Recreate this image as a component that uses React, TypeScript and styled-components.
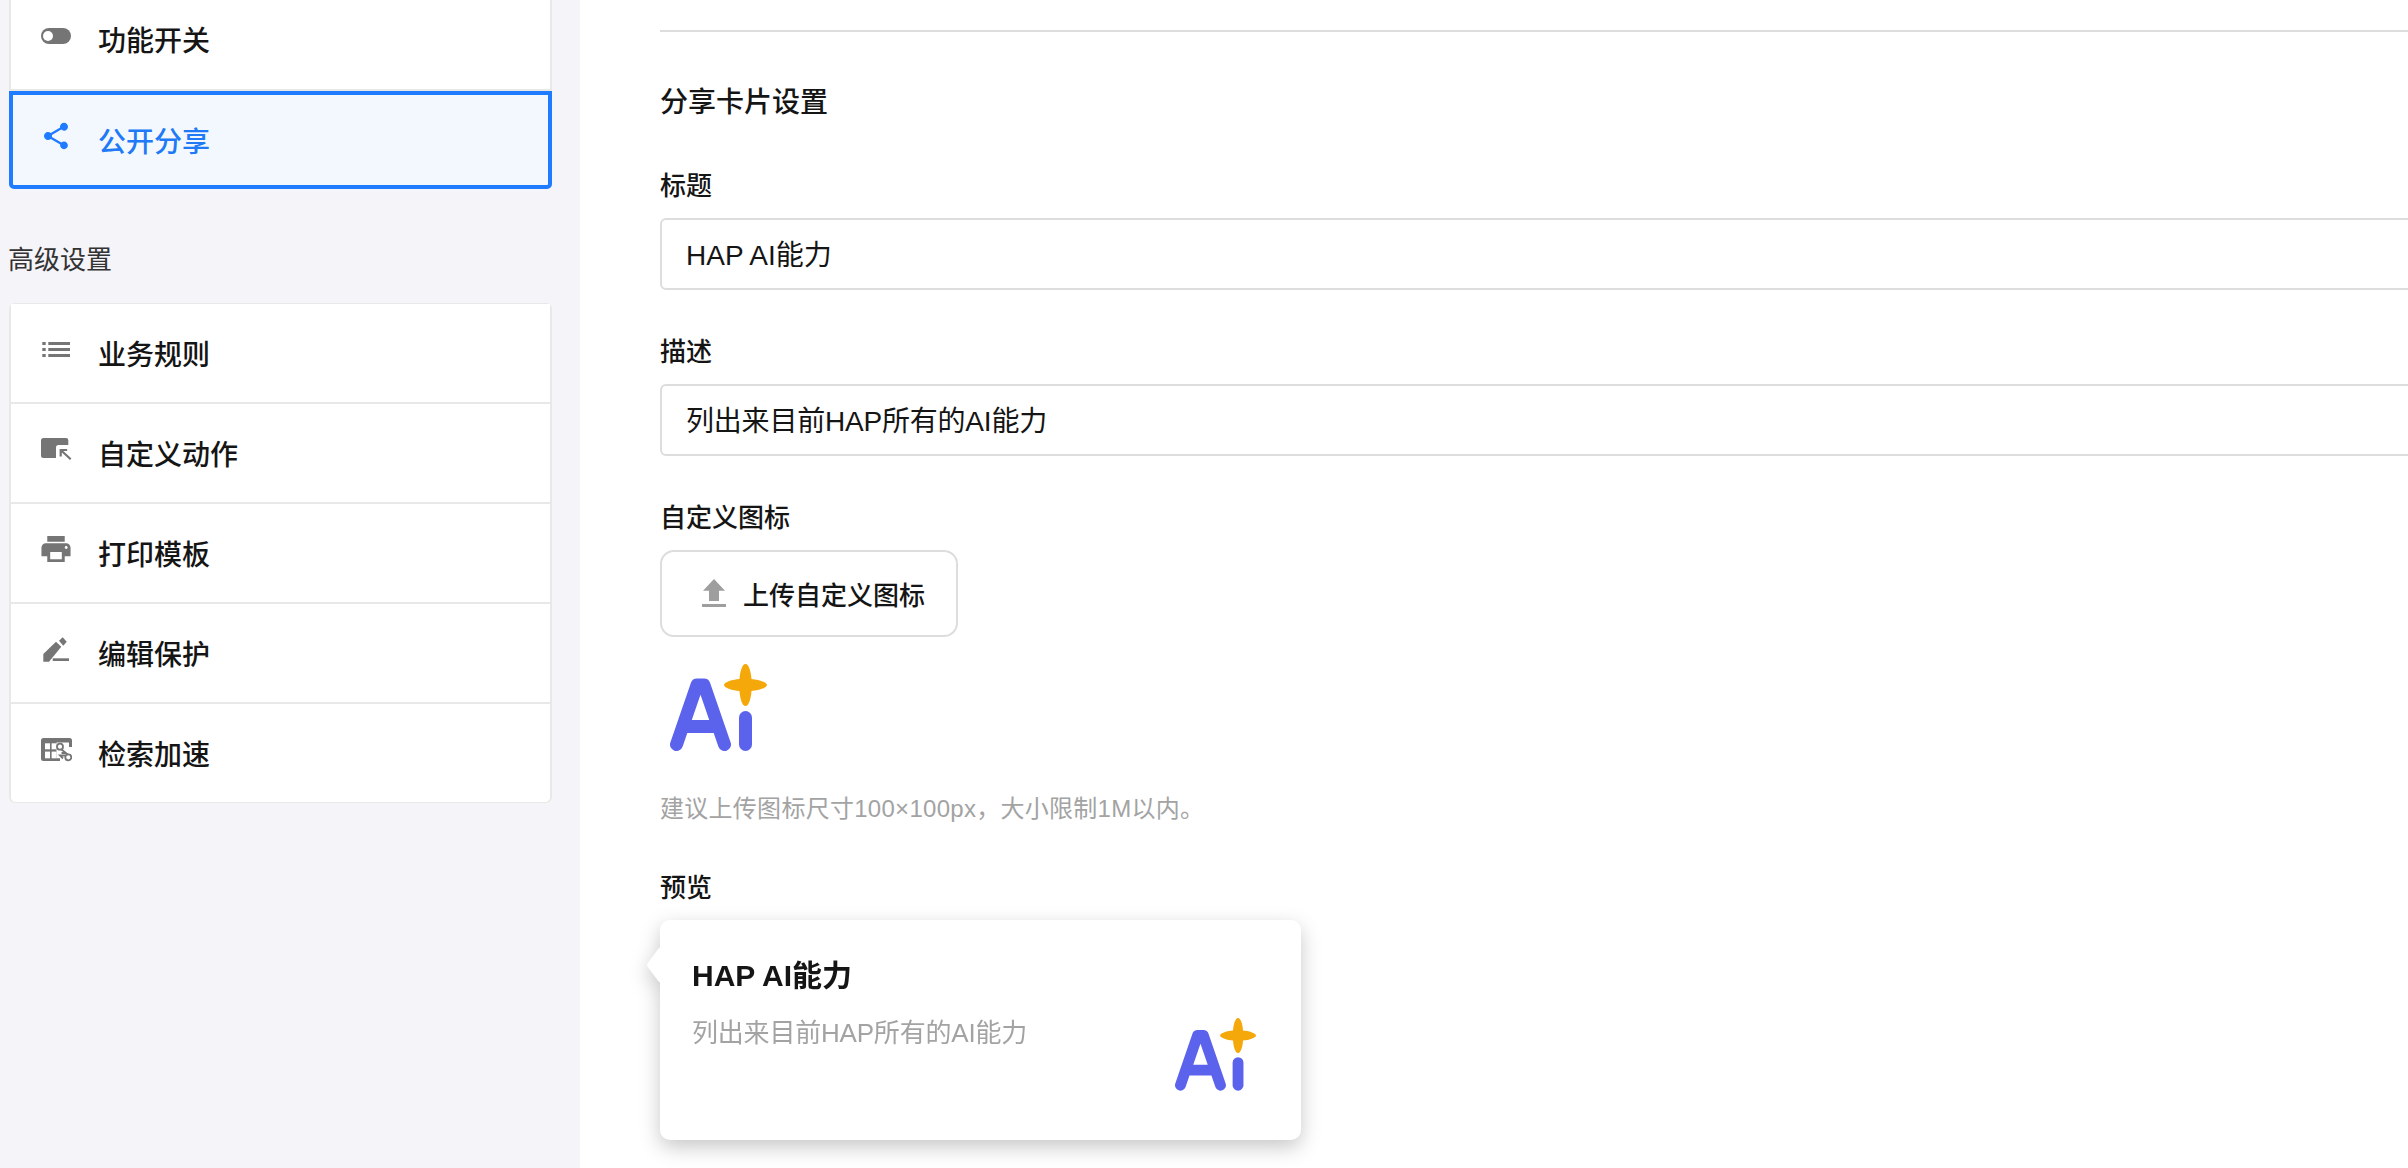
import React from "react";
import styled, { createGlobalStyle } from "styled-components";

const FONT = `"Liberation Sans", "Noto Sans CJK SC", sans-serif`;

const Global = createGlobalStyle`
  html, body { margin: 0; padding: 0; background: #fff; overflow: hidden; }
  * { box-sizing: border-box; }
  body { font-family: ${FONT}; color: #151515; }
`;

const Page = styled.div`
  display: grid;
  grid-template-columns: 580px 1fr;
  width: 2408px;
  height: 1168px;
  overflow: hidden;
`;

const Sidebar = styled.aside`
  background: #f4f4f9;
  padding: 0 28px 0 9px;
`;

const Card = styled.div<{ $open?: boolean }>`
  background: #fff;
  border: solid #e8e8e8;
  border-width: ${(p) => (p.$open ? "0 2px 2px" : "1px 2px")};
  border-radius: ${(p) => (p.$open ? "0 0 6px 6px" : "6px")};
  margin-top: ${(p) => (p.$open ? "-10px" : "0")};
`;

const Row = styled.div<{ $active?: boolean; $h?: number }>`
  display: flex;
  align-items: center;
  gap: 26px;
  height: ${(p) => p.$h ?? 100}px;
  padding: 0 0 1px 29px;
  font-size: 28px;
  font-weight: 500;
  color: ${(p) => (p.$active ? "#2079f5" : "#151515")};
  background: ${(p) => (p.$active ? "#f3f8ff" : "#fff")};
  border-bottom: 2px solid #e8e8e8;
  ${(p) =>
    p.$active
      ? `border: 4px solid #1f7bff; border-radius: 0 0 5px 5px; margin: 0 -2px -2px; padding-left: 27px;`
      : ""}
  &:last-child {
    ${(p) => (p.$active ? "" : "border-bottom: 0; height: 98px; border-radius: 0 0 6px 6px;")}
  }
  svg { margin-bottom: 7px; flex: none; }
`;

const SectionLabel = styled.div`
  font-size: 26px;
  line-height: 36px;
  color: #333;
  margin: 53px 0 25px -1px;
`;

const Main = styled.main`
  padding: 30px 0 0 80px;
  min-width: 0;
`;

const Divider = styled.div`
  height: 2px;
  background: #dddddd;
  margin-bottom: 51px;
`;

const Heading = styled.h2`
  margin: 0 0 45px;
  font-size: 28px;
  line-height: 40px;
  font-weight: 500;
`;

const Label = styled.div`
  font-size: 26px;
  line-height: 36px;
  font-weight: 500;
  margin-bottom: 14px;
`;

const Input = styled.div<{ $tight?: boolean }>`
  display: flex;
  align-items: center;
  width: 2000px;
  height: 72px;
  padding: 0 0 3px 24px;
  border: 2px solid #dddddd;
  border-radius: 6px;
  font-size: 28px;
  letter-spacing: ${(p) => (p.$tight ? "-0.2px" : "0")};
  margin-bottom: 44px;
`;

const UploadButton = styled.div`
  display: inline-flex;
  align-items: center;
  gap: 17px;
  width: 298px;
  height: 87px;
  padding: 0 0 1px 40px;
  border: 2px solid #dddddd;
  border-radius: 14px;
  font-size: 26px;
  font-weight: 500;
`;

const UploadLine = styled.div`
  display: flex;
  margin: 2px 0 27px;
`;

const LogoLine = styled.div`
  display: flex;
  padding-left: 10px;
  margin-bottom: 41px;
`;

const Hint = styled.div`
  font-size: 24px;
  line-height: 34px;
  letter-spacing: 0.28px;
  color: #a3a3a3;
  margin-bottom: 44px;
`;

const PreviewWrap = styled.div`
  position: relative;
  width: 641px;
  margin-top: 1px;
  filter: drop-shadow(0 7px 10px rgba(0, 0, 0, 0.22));
  &::before {
    content: "";
    position: absolute;
    left: -13px;
    top: 32px;
    width: 26px;
    height: 26px;
    background: #fff;
    border-radius: 3px;
    transform: scaleX(0.75) rotate(45deg);
  }
`;

const PreviewCard = styled.div`
  position: relative;
  display: flex;
  justify-content: space-between;
  height: 220px;
  padding: 36px 45px 0 32px;
  background: #fff;
  border-radius: 10px;
`;

const PreviewTitle = styled.div`
  font-size: 30px;
  line-height: 40px;
  font-weight: 700;
  margin-bottom: 19px;
`;

const PreviewDesc = styled.div`
  font-size: 26px;
  line-height: 36px;
  letter-spacing: -0.2px;
  color: #a3a3a3;
`;

const PreviewLogo = styled.div`
  padding-top: 62px;
`;

const Icon = ({ children }: { children: React.ReactNode }) => (
  <svg width={32} height={32} viewBox="0 0 32 32" fill="#757575">{children}</svg>
);

const ToggleIcon = () => (
  <Icon>
    <rect x="1" y="8" width="30" height="16" rx="8" />
    <circle cx="8" cy="16" r="5" fill="#fff" />
  </Icon>
);
const ShareIcon = () => (
  <svg width={32} height={32} viewBox="0 0 24 24" fill="#1f7bff">
    <path d="M18 16.08c-.76 0-1.44.3-1.96.77L8.91 12.7c.05-.23.09-.46.09-.7s-.04-.47-.09-.7l7.05-4.11c.54.5 1.25.81 2.04.81 1.66 0 3-1.34 3-3s-1.34-3-3-3-3 1.34-3 3c0 .24.04.47.09.7L8.04 9.81C7.5 9.31 6.79 9 6 9c-1.66 0-3 1.34-3 3s1.34 3 3 3c.79 0 1.5-.31 2.04-.81l7.12 4.16c-.05.21-.08.43-.08.65 0 1.61 1.31 2.92 2.92 2.92s2.92-1.31 2.92-2.92-1.31-2.92-2.92-2.92z" />
  </svg>
);
const ListIcon = () => (
  <Icon>
    <rect x="2.300" y="9" width="3.400" height="3" />
    <rect x="2.300" y="15" width="3.400" height="3" />
    <rect x="2.300" y="21" width="3.400" height="3" />
    <rect x="8.300" y="9" width="21.700" height="3" />
    <rect x="8.300" y="15" width="21.700" height="3" />
    <rect x="8.300" y="21" width="21.700" height="3" />
  </Icon>
);
const ActionIcon = () => (
  <Icon>
    <path d="M3.500 5H26a2.300 2.300 0 0 1 2.300 2.300V12H18.500a2.500 2.500 0 0 0-2.500 2.500V25H3.500A2.500 2.500 0 0 1 1 22.500V7.500A2.500 2.500 0 0 1 3.500 5z" />
    <path d="M20.700 23.500V17H27.200M20.700 17L30.700 26.300" fill="none" stroke="#757575" strokeWidth="2.200" />
  </Icon>
);
const PrintIcon = () => (
  <svg width={32} height={32} viewBox="1 2 22 20" fill="#757575">
    <path d="M19 8H5c-1.66 0-3 1.34-3 3v6h4v4h12v-4h4v-6c0-1.66-1.34-3-3-3zm-3 11H8v-5h8v5zm3-7c-.55 0-1-.45-1-1s.45-1 1-1 1 .45 1 1-.45 1-1 1zm-1-9H6v4h12V3z" />
  </svg>
);
const EditIcon = () => (
  <Icon>
    <path d="M3.300 28.700V21L16 8.700L21.300 13.700L9 28.700z" />
    <path d="M19 7.700L22.700 4.300L26.700 8.700L23.300 12.700z" />
    <rect x="12.700" y="25.300" width="16.300" height="2.700" />
  </Icon>
);
const SearchIcon = () => (
  <Icon>
    <rect x="1" y="5" width="31" height="23" rx="2.500" />
    <rect x="5" y="10.300" width="5" height="6" fill="#fff" />
    <rect x="11.600" y="10.300" width="5" height="6" fill="#fff" />
    <rect x="5" y="18.600" width="5" height="6.700" fill="#fff" />
    <rect x="11.600" y="18.600" width="5" height="6.700" fill="#fff" />
    <path d="M16.500 9.500H29V14H33V29H20V25.300H16.500z" fill="#fff" />
    <g fill="#fff" stroke="#757575" strokeWidth="1.800">
      <path d="M21.500 16.500L26 20H21.500" fill="none" />
      <circle cx="20" cy="13.700" r="3" />
      <circle cx="28.300" cy="24.300" r="3" />
      <path d="M25.500 22.500H20L23 25.500" fill="none" />
    </g>
  </Icon>
);
const UploadIcon = () => (
  <svg width={24} height={28} viewBox="702 581 24 28" fill="#9e9e9e">
    <path d="M702 606h24v3.400h-24zM714 581L725 592.700h-6V603h-10V592.700h-6z" />
  </svg>
);

const AiLogo = ({ w = 97 }: { w?: number }) => (
  <svg width={w} height={(w * 87) / 97} viewBox="0 0 97 87">
    <path
      d="M6.500 80.500L27 21h7l20.500 59.500M15 62.500h31"
      fill="none"
      stroke="#5b62eb"
      strokeWidth="13"
      strokeLinecap="round"
      strokeLinejoin="round"
    />
    <rect x="69" y="47" width="13" height="40" rx="6.500" fill="#5b62eb" />
    <path
      d="M75.500 0C79 0 81 8 81.500 15C88 15.500 97 18 97 21C97 24 88 26.500 81.500 27C81 34 79 42 75.500 42C72 42 70 34 69.500 27C63 26.500 54 24 54 21C54 18 63 15.500 69.500 15C70 8 72 0 75.500 0Z"
      fill="#f5a80a"
    />
  </svg>
);

const topItems = [{ label: "功能开关", icon: <ToggleIcon /> }];
const advanced = [
  { label: "业务规则", icon: <ListIcon /> },
  { label: "自定义动作", icon: <ActionIcon /> },
  { label: "打印模板", icon: <PrintIcon /> },
  { label: "编辑保护", icon: <EditIcon /> },
  { label: "检索加速", icon: <SearchIcon /> },
];

export default function App() {
  return (
    <>
      <Global />
      <Page>
        <Sidebar>
          <Card $open>
            {topItems.map((i) => (
              <Row key={i.label} $h={101}>
                {i.icon}
                <span>{i.label}</span>
              </Row>
            ))}
            <Row $active $h={98}>
              <ShareIcon />
              <span>公开分享</span>
            </Row>
          </Card>
          <SectionLabel>高级设置</SectionLabel>
          <Card>
            {advanced.map((i) => (
              <Row key={i.label}>
                {i.icon}
                <span>{i.label}</span>
              </Row>
            ))}
          </Card>
        </Sidebar>
        <Main>
          <Divider />
          <Heading>分享卡片设置</Heading>
          <Label>标题</Label>
          <Input>HAP AI能力</Input>
          <Label>描述</Label>
          <Input $tight>列出来目前HAP所有的AI能力</Input>
          <Label>自定义图标</Label>
          <UploadLine>
            <UploadButton>
              <UploadIcon />
              上传自定义图标
            </UploadButton>
          </UploadLine>
          <LogoLine>
            <AiLogo />
          </LogoLine>
          <Hint>建议上传图标尺寸100×100px，大小限制1M以内。</Hint>
          <Label>预览</Label>
          <PreviewWrap>
            <PreviewCard>
              <div>
                <PreviewTitle>HAP AI能力</PreviewTitle>
                <PreviewDesc>列出来目前HAP所有的AI能力</PreviewDesc>
              </div>
              <PreviewLogo>
                <AiLogo w={81} />
              </PreviewLogo>
            </PreviewCard>
          </PreviewWrap>
        </Main>
      </Page>
    </>
  );
}
